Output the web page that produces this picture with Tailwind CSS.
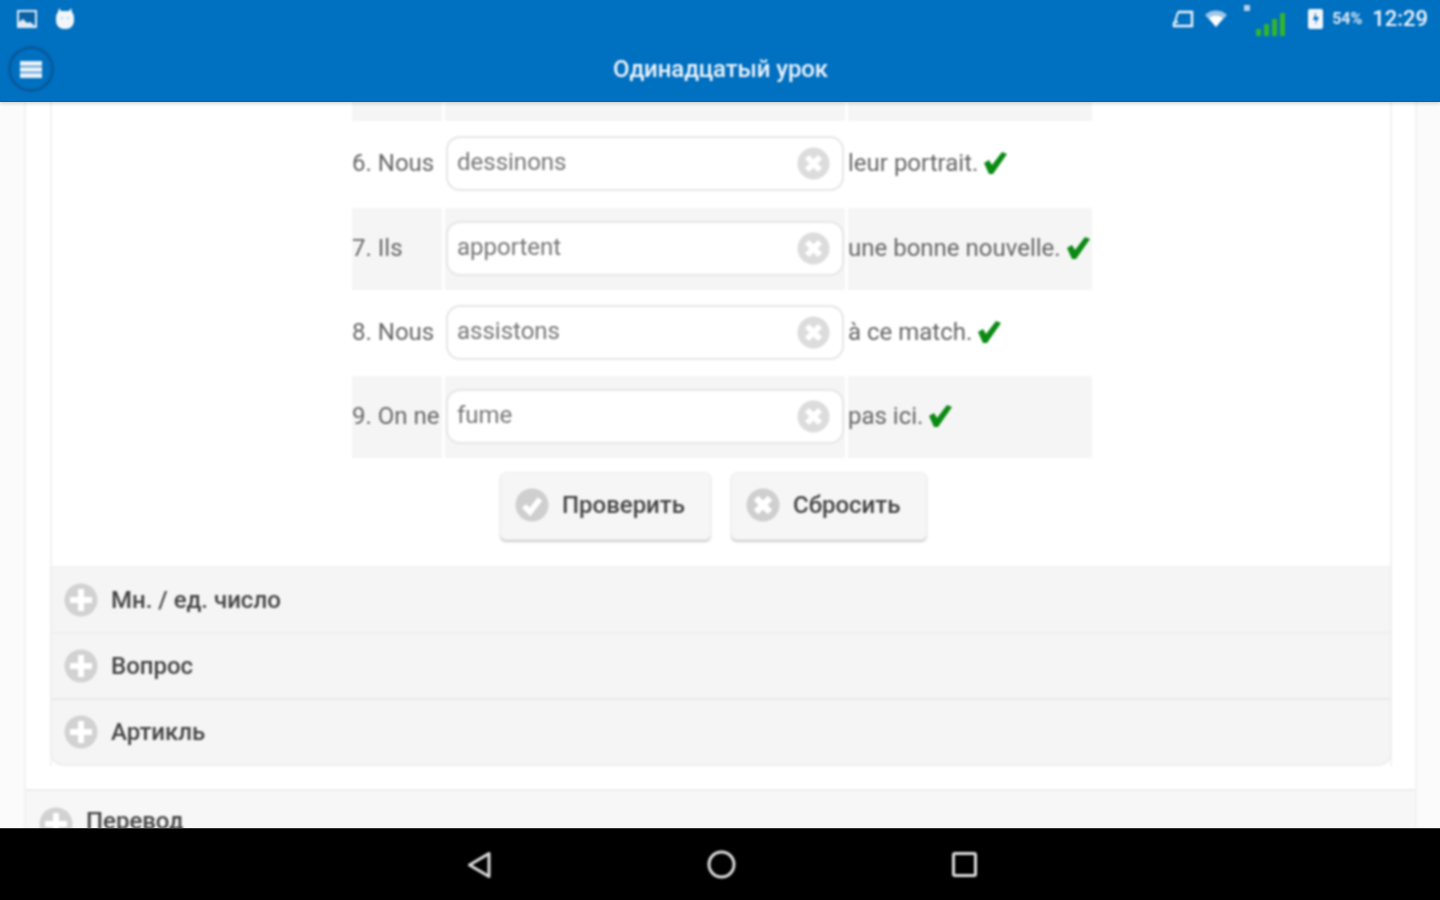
<!DOCTYPE html>
<html lang="ru">
<head>
  <meta charset="UTF-8" />
  <title>Одинадцатый урок</title>
  <script src="https://cdn.jsdelivr.net/npm/@tailwindcss/browser@4"></script>
</head>
<body class="font-[Roboto,sans-serif] bg-white">
<div class="h-[900px] w-[1440px] flex flex-col overflow-hidden">

  <!-- app header -->
  <header class="h-[102px] shrink-0 bg-[#0070c0] border-b border-[#0a62a5] text-white z-10 shadow-[0_2px_3px_rgba(0,0,0,0.15)]">
    <div class="h-[37px] flex items-center justify-between pl-[17px] pr-[12px] blur-[0.8px]">
      <div class="flex items-center gap-[18px]">
        <svg class="w-[20px] h-[18px]" viewBox="0 0 20 18"><rect x="1" y="1" width="18" height="16" fill="none" stroke="#dfeaf4" stroke-width="2"/><rect x="2" y="2" width="16" height="10" fill="#0a62a5"/><path d="M2 16v-4l4-3 4 4 3-1 5 4z" fill="#dfeaf4"/></svg>
        <svg class="w-[20px] h-[21px]" viewBox="0 0 20 21"><path d="M4 0l2 3h8l2-3 1 4a9 9 0 0 1 2 6v3a8 8 0 0 1-8 8H9a8 8 0 0 1-8-8v-3a9 9 0 0 1 2-6z" fill="#f2f6fa"/><circle cx="7" cy="10" r="1" fill="#9fc6e6"/><circle cx="13" cy="10" r="1" fill="#9fc6e6"/></svg>
      </div>
      <div class="flex items-center">
        <svg class="w-[22px] h-[18px]" viewBox="0 0 22 18"><path d="M6 2h14v14H2v-4" fill="none" stroke="#eef4fa" stroke-width="2.4"/><path d="M6 2L3 12h3" fill="none" stroke="#eef4fa" stroke-width="2"/></svg>
        <svg class="w-[22px] h-[17px] ml-[11px]" viewBox="0 0 22 17"><path d="M0 5a16 16 0 0 1 22 0L11 17z" fill="#9fc6e6"/><path d="M4 8a11 11 0 0 1 14 0l-7 9z" fill="#fff"/></svg>
        <div class="w-[29px] h-[24px] ml-[29px] self-start mt-[10px] flex items-end gap-[3px] relative">
          <span class="absolute -top-[7px] -left-[12px] w-[6px] h-[6px] bg-[#b7d3ea]"></span>
          <span class="w-[5px] h-[7px] bg-[#33b52c]"></span>
          <span class="w-[5px] h-[12px] bg-[#33b52c]"></span>
          <span class="w-[5px] h-[17px] bg-[#33b52c]"></span>
          <span class="w-[5px] h-[23px] bg-[#33b52c]"></span>
        </div>
        <svg class="w-[17px] h-[20px] ml-[22px]" viewBox="0 0 17 20"><path d="M3 0h11a2 2 0 0 1 2 2v16a2 2 0 0 1-2 2H3a2 2 0 0 1-2-2V2a2 2 0 0 1 2-2z" fill="#f2f6fa"/><path d="M9 3L6 11h3l-1 5 4-8H9z" fill="#0070c0"/></svg>
        <span class="ml-[8px] text-[16px] font-bold text-[#dbe8f4] w-[32px] whitespace-nowrap">54%</span>
        <span class="ml-[8px] text-[22px] leading-none font-medium text-[#f2f6fa]">12:29</span>
      </div>
    </div>
    <div class="h-[64px] grid grid-cols-[1fr_auto_1fr] items-center px-[8px] blur-[0.8px]">
      <div class="w-[46px] h-[46px] rounded-full border-[3px] border-[#075a9c] flex flex-col items-center justify-center gap-[1px]">
        <span class="w-[22px] h-[5px] bg-[#e6eff7]"></span>
        <span class="w-[22px] h-[5px] bg-[#e6eff7]"></span>
        <span class="w-[22px] h-[5px] bg-[#e6eff7]"></span>
      </div>
      <h1 class="text-[24px] font-medium text-[#eef4fa] tracking-[-0.1px] ml-[1px]">Одинадцатый урок</h1>
      <div></div>
    </div>
  </header>

  <!-- lesson content -->
  <main class="flex-1 min-h-0 overflow-hidden bg-[#fbfbfb] px-[24px]">
    <div class="w-[1393px] bg-white border-x-2 border-[#f2f2f2] blur-[0.8px]">
      <div class="px-[24px]">
        <div class="w-[1342px] border-x-2 border-[#f2f2f2]">

          <!-- exercise table -->
          <div class="w-[740px] ml-[300px] text-[24px] text-[#666]">
            <div class="h-[19px] flex gap-[3px]">
              <div class="w-[90px] bg-[#f5f5f5]"></div>
              <div class="w-[400px] bg-[#f5f5f5]"></div>
              <div class="w-[244px] bg-[#f5f5f5]"></div>
            </div>

            <div class="h-[87px] flex gap-[3px] items-stretch">
              <div class="w-[90px] flex items-center pb-[3px]">6. Nous</div>
              <div class="w-[400px] flex items-center px-[1px] pb-[2px]">
                <div class="relative w-full">
                  <input class="w-full h-[55px] bg-white border-2 border-[#e6e6e6] rounded-[14px] pl-[9px] pb-[3px] text-[#777] text-[24px]" value="dessinons" />
                  <svg class="absolute right-[14px] top-[11px] w-[33px] h-[33px]" viewBox="0 0 33 33"><circle cx="16.5" cy="16.5" r="16" fill="#dcdcdc"/><path d="M10 10l13 13M23 10L10 23" stroke="#fff" stroke-width="6"/></svg>
                </div>
              </div>
              <div class="w-[244px] flex items-center gap-[6px] whitespace-nowrap pb-[3px]">leur portrait.
                <svg class="w-[23px] h-[22px]" viewBox="0 0 23 22"><path d="M0 11l5-3 3 5L18 0l5 2L9 22H5z" fill="#0a8a12"/></svg>
              </div>
            </div>

            <div class="h-[82px] flex gap-[3px] items-stretch">
              <div class="w-[90px] flex items-center bg-[#f5f5f5] pb-[3px]">7. Ils</div>
              <div class="w-[400px] flex items-center px-[1px] bg-[#f5f5f5] pb-[2px]">
                <div class="relative w-full">
                  <input class="w-full h-[55px] bg-white border-2 border-[#e6e6e6] rounded-[14px] pl-[9px] pb-[3px] text-[#777] text-[24px]" value="apportent" />
                  <svg class="absolute right-[14px] top-[11px] w-[33px] h-[33px]" viewBox="0 0 33 33"><circle cx="16.5" cy="16.5" r="16" fill="#dcdcdc"/><path d="M10 10l13 13M23 10L10 23" stroke="#fff" stroke-width="6"/></svg>
                </div>
              </div>
              <div class="w-[244px] flex items-center gap-[6px] whitespace-nowrap bg-[#f5f5f5] pb-[3px]">une bonne nouvelle.
                <svg class="w-[23px] h-[22px]" viewBox="0 0 23 22"><path d="M0 11l5-3 3 5L18 0l5 2L9 22H5z" fill="#0a8a12"/></svg>
              </div>
            </div>

            <div class="h-[86px] flex gap-[3px] items-stretch">
              <div class="w-[90px] flex items-center pb-[3px]">8. Nous</div>
              <div class="w-[400px] flex items-center px-[1px] pb-[2px]">
                <div class="relative w-full">
                  <input class="w-full h-[55px] bg-white border-2 border-[#e6e6e6] rounded-[14px] pl-[9px] pb-[3px] text-[#777] text-[24px]" value="assistons" />
                  <svg class="absolute right-[14px] top-[11px] w-[33px] h-[33px]" viewBox="0 0 33 33"><circle cx="16.5" cy="16.5" r="16" fill="#dcdcdc"/><path d="M10 10l13 13M23 10L10 23" stroke="#fff" stroke-width="6"/></svg>
                </div>
              </div>
              <div class="w-[244px] flex items-center gap-[6px] whitespace-nowrap pb-[3px]">à ce match.
                <svg class="w-[23px] h-[22px]" viewBox="0 0 23 22"><path d="M0 11l5-3 3 5L18 0l5 2L9 22H5z" fill="#0a8a12"/></svg>
              </div>
            </div>

            <div class="h-[82px] flex gap-[3px] items-stretch">
              <div class="w-[90px] flex items-center bg-[#f5f5f5] whitespace-nowrap pb-[3px]">9. On ne</div>
              <div class="w-[400px] flex items-center px-[1px] bg-[#f5f5f5] pb-[2px]">
                <div class="relative w-full">
                  <input class="w-full h-[55px] bg-white border-2 border-[#e6e6e6] rounded-[14px] pl-[9px] pb-[3px] text-[#777] text-[24px]" value="fume" />
                  <svg class="absolute right-[14px] top-[11px] w-[33px] h-[33px]" viewBox="0 0 33 33"><circle cx="16.5" cy="16.5" r="16" fill="#dcdcdc"/><path d="M10 10l13 13M23 10L10 23" stroke="#fff" stroke-width="6"/></svg>
                </div>
              </div>
              <div class="w-[244px] flex items-center gap-[6px] whitespace-nowrap bg-[#f5f5f5] pb-[3px]">pas ici.
                <svg class="w-[23px] h-[22px]" viewBox="0 0 23 22"><path d="M0 11l5-3 3 5L18 0l5 2L9 22H5z" fill="#0a8a12"/></svg>
              </div>
            </div>
          </div>

          <!-- buttons -->
          <div class="flex justify-center gap-[20px] mt-[14px] pr-[15px]">
            <button class="w-[211px] h-[68px] flex items-center gap-[13px] pl-[14px] pb-[3px] bg-[#f6f6f6] border border-[#eee] rounded-[6px] shadow-[0_2px_2px_rgba(0,0,0,0.2)] text-[24px] font-medium text-[#444]">
              <svg class="w-[34px] h-[34px]" viewBox="0 0 34 34"><circle cx="17" cy="17" r="16.5" fill="#cfcfcf"/><path d="M9 18l6 6 10-13" fill="none" stroke="#fff" stroke-width="5.500"/></svg>
              Проверить
            </button>
            <button class="w-[196px] h-[68px] flex items-center gap-[13px] pl-[14px] pb-[3px] bg-[#f6f6f6] border border-[#eee] rounded-[6px] shadow-[0_2px_2px_rgba(0,0,0,0.2)] text-[24px] font-medium text-[#444]">
              <svg class="w-[34px] h-[34px]" viewBox="0 0 34 34"><circle cx="17" cy="17" r="16.5" fill="#cfcfcf"/><path d="M10 10l14 14M24 10L10 24" stroke="#fff" stroke-width="6.500"/></svg>
              Сбросить
            </button>
          </div>

          <!-- accordion -->
          <div class="mt-[26px] -mx-[2px] bg-[#f5f5f5] rounded-b-[14px] border-x-2 border-b-2 border-[#eeeeee] text-[24px] font-medium text-[#444]">
            <div class="h-[68px] flex items-center gap-[13px] pl-[12px] border-b-2 border-[#efefef] border-t-2 border-t-[#f2f2f2]">
              <svg class="w-[34px] h-[34px]" viewBox="0 0 34 34"><circle cx="17" cy="17" r="16.5" fill="#d2d2d2"/><path d="M17 6v22M6 17h22" stroke="#fff" stroke-width="6"/></svg>
              <span>Мн. / ед. число</span>
            </div>
            <div class="h-[66px] flex items-center gap-[13px] pl-[12px] border-b-2 border-[#e9e9e9]">
              <svg class="w-[34px] h-[34px]" viewBox="0 0 34 34"><circle cx="17" cy="17" r="16.5" fill="#d2d2d2"/><path d="M17 6v22M6 17h22" stroke="#fff" stroke-width="6"/></svg>
              <span>Вопрос</span>
            </div>
            <div class="h-[64px] flex items-center gap-[13px] pl-[12px]">
              <svg class="w-[34px] h-[34px]" viewBox="0 0 34 34"><circle cx="17" cy="17" r="16.5" fill="#d2d2d2"/><path d="M17 6v22M6 17h22" stroke="#fff" stroke-width="6"/></svg>
              <span>Артикль</span>
            </div>
          </div>
        </div>
      </div>

      <div class="mt-[23px] h-[70px] bg-[#f7f7f7] border-t-2 border-[#eeeeee] flex items-start gap-[13px] pl-[13px] pt-[16px] text-[24px] font-medium text-[#444]">
        <svg class="w-[34px] h-[34px]" viewBox="0 0 34 34"><circle cx="17" cy="17" r="16.5" fill="#d2d2d2"/><path d="M17 6v22M6 17h22" stroke="#fff" stroke-width="6"/></svg>
        <span class="leading-[28px]">Перевод</span>
      </div>
    </div>
  </main>

  <!-- android nav bar -->
  <nav class="h-[72px] shrink-0 bg-black border-t border-[#333] flex items-center justify-center gap-[216px] pl-[3px] z-10">
    <svg class="w-[24px] h-[28px] blur-[0.8px]" viewBox="0 0 24 28"><path d="M22 2.500v23L2.500 14z" fill="none" stroke="#ddd" stroke-width="3" stroke-linejoin="round"/></svg>
    <svg class="w-[29px] h-[29px] blur-[0.8px]" viewBox="0 0 29 29"><circle cx="14.500" cy="14.500" r="12.500" fill="none" stroke="#ddd" stroke-width="3"/></svg>
    <svg class="w-[25px] h-[25px] blur-[0.8px]" viewBox="0 0 25 25"><rect x="1.500" y="1.500" width="22" height="22" rx="1.500" fill="none" stroke="#ddd" stroke-width="3"/></svg>
  </nav>
</div>
</body>
</html>
